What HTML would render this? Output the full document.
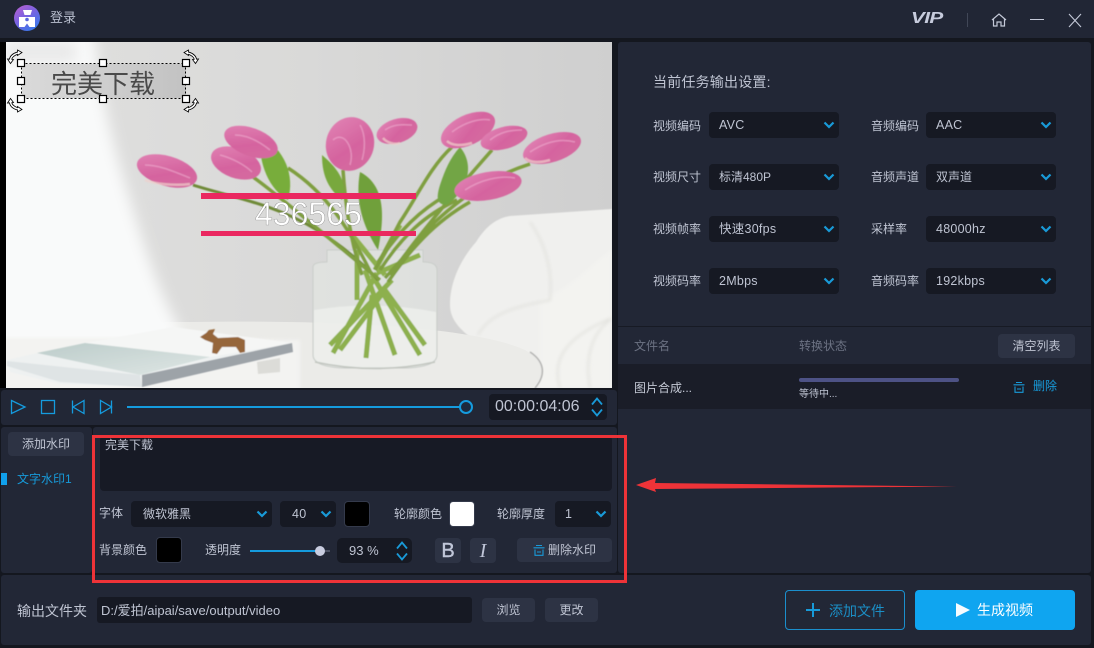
<!DOCTYPE html>
<html lang="zh"><head><meta charset="utf-8"><title>登录</title>
<style>
*{box-sizing:border-box;margin:0;padding:0}
html,body{width:1094px;height:648px;overflow:hidden;background:#14171f}
body{position:relative;font:12px/16px "Liberation Sans","Noto Sans CJK SC",sans-serif;color:#bfc4d2}
.a{position:absolute}
.t{position:absolute;white-space:nowrap;line-height:16px}
.p{position:absolute;background:#222736}
.s{position:absolute;height:26px;background:#161923;border-radius:4px;color:#bfc4d2;line-height:27px;padding-left:10px;white-space:nowrap}
.s svg{position:absolute;right:4px;top:9px}
.l{font-size:12.5px;letter-spacing:.25px}
.b{position:absolute;background:#2d3344;border-radius:4px;text-align:center;color:#bfc4d2;white-space:nowrap}
.c{position:absolute;width:26px;height:26px;border-radius:4px;border:1px solid #343a4b;background:#000}
</style></head><body>
<svg width="0" height="0" style="position:absolute"><defs><symbol id="ch" viewBox="0 0 12 8"><path d="M1.5 1.5 6 6l4.500-4.500" fill="none" stroke="#199ad8" stroke-width="2.200"/></symbol>
<symbol id="sp" viewBox="0 0 14 24"><path d="M2 9.500 7 3.500l5 6M2 14.500l5 6 5-6" fill="none" stroke="#199ad8" stroke-width="1.800"/></symbol>
<symbol id="tr" viewBox="0 0 12 12"><path d="M3 1.500h6M.5 3.800h11M2 5.500v5.800h8V5.500M4 8h4" fill="none" stroke="#199ad8" stroke-width="1.100"/></symbol></defs></svg>

<div class="p" style="left:0;top:0;width:1094px;height:38px;background:#212635"></div>
<svg class="a" style="left:13px;top:4px" width="28" height="28" viewBox="0 0 28 28"><defs><linearGradient id="lg" x1="0" y1="0" x2=".7" y2="1"><stop offset="0" stop-color="#c05fd0"/><stop offset=".5" stop-color="#7a62e0"/><stop offset="1" stop-color="#3878ea"/></linearGradient></defs><circle cx="14" cy="14" r="13" fill="url(#lg)"/><path d="M10 6h9l-1.500 5h-6zM6 13h16v10h-5.500L14 19.500 11.500 23H6z" fill="#fff"/><circle cx="14" cy="15.500" r="1.800" fill="#5a67dd"/></svg>
<span class="t" style="left:50px;top:10px;font-size:13px;color:#b9bfcf">登录</span>
<span class="t" style="left:911px;top:10px;font:italic bold 16px/18px 'Liberation Sans',sans-serif;color:#c6cbdc;letter-spacing:-.5px;transform:scaleX(1.300);transform-origin:left">VIP</span>
<div class="a" style="left:967px;top:13px;width:1px;height:14px;background:#414757"></div>
<svg class="a" style="left:990px;top:12px" width="18" height="16" viewBox="0 0 18 16"><path d="M2 8 9 2l7 6M3.500 7v7h3.500v-4h4v4h3.500V7" fill="none" stroke="#c4c9d8" stroke-width="1.200"/></svg>
<div class="a" style="left:1030px;top:19px;width:14px;height:1px;background:#c4c9d8"></div>
<svg class="a" style="left:1067px;top:12px" width="16" height="16" viewBox="0 0 16 16"><path d="M2 2l12 13M14 2 2 15" fill="none" stroke="#c4c9d8" stroke-width="1.100"/></svg>

<div class="a" style="left:0;top:42px;width:6px;height:346px;background:#000"></div>
<svg class="a" style="left:6px;top:42px" width="606" height="346" viewBox="6 42 606 346">
<defs>
<linearGradient id="wall" x1="0" y1="0" x2="1" y2="0"><stop offset="0" stop-color="#e0e0df"/><stop offset=".5" stop-color="#d9d9d8"/><stop offset="1" stop-color="#cfcfcf"/></linearGradient>
<linearGradient id="pk" x1="0" y1="0" x2="1" y2="1"><stop offset="0" stop-color="#e286b6"/><stop offset=".55" stop-color="#d5649f"/><stop offset="1" stop-color="#d46c9f"/></linearGradient>
<linearGradient id="wm" x1="0" y1="0" x2="1" y2="0"><stop offset="0" stop-color="#dadada"/><stop offset="1" stop-color="#c2c2c2"/></linearGradient>
<linearGradient id="bk" x1="0" y1="0" x2="1" y2="1"><stop offset="0" stop-color="#bcccca"/><stop offset="1" stop-color="#dfe7e5"/></linearGradient>
<filter id="bl"><feGaussianBlur stdDeviation=".6"/></filter><filter id="b4" x="-30%" y="-30%" width="160%" height="160%"><feGaussianBlur stdDeviation="7"/></filter>
<filter id="b2"><feGaussianBlur stdDeviation="1.500"/></filter>
<g id="rot"><path d="M10.500 60Q11 55 18 53" fill="none" stroke="#000" stroke-width="3.200"/><path d="M17.500 50 22 52.500 17.500 55.500Z M7.500 59 10.500 63.500 13.500 59.500Z" fill="#fff" stroke="#000" stroke-width=".8"/><path d="M10.500 60Q11 55 18 53" fill="none" stroke="#fff" stroke-width="1.400"/></g>
</defs>
<rect x="6" y="42" width="606" height="346" fill="url(#wall)"/>
<path d="M476 242C486 226 497 218 510 216L612 209V388H520C510 350 450 340 450 305C450 280 462 258 476 242Z" fill="#f0f0ee" filter="url(#bl)"/>
<path d="M540 300C570 290 595 260 612 250V388H540Z" fill="#f3f3f0" filter="url(#b2)"/>
<path d="M530 222C550 250 552 280 550 300C520 306 490 312 478 335M560 388C553 365 558 340 612 318M610 320C590 335 585 360 590 388" fill="none" stroke="#e2e2de" stroke-width="2" filter="url(#b2)"/>
<path d="M-20 322H190C320 320 470 325 525 350C545 362 546 375 532 388H-20Z" fill="#ebebe8"/>
<path d="M535 388C546 375 545 362 530 352" fill="none" stroke="#b4b4b2" stroke-width="1.500" filter="url(#bl)"/>
<path d="M-30 20H93C98 80 108 130 130 200C145 250 160 295 178 325L190 400H-30Z" fill="#f9fafa" filter="url(#b4)"/>
<rect x="6" y="42" width="70" height="20" fill="#e8e8e8" filter="url(#b4)"/>
<path d="M-10 338H200L300 340V400H-10Z" fill="#f3f3f1" filter="url(#b2)"/>
<g filter="url(#bl)">
<path d="M313 267Q313 262 327 262V250H423V262Q437 262 437 270V355Q437 367 405 368H345Q313 367 313 355Z" fill="#e3e6e3" fill-opacity=".65" stroke="#c9cdc9"/>
<path d="M314 310Q375 300 436 312V355Q436 366 405 367H345Q314 366 314 355Z" fill="#eef0ec" fill-opacity=".8"/>
<path d="M315 362Q375 375 435 362" fill="none" stroke="#c2c6c0" stroke-width="1.500"/>
<path d="M333 353 377 273M340 350 385 290M366 358 372 295M330 345 392 280M420 355 372 275M425 345 385 290M395 355 365 270M357 300V250M377 273 420 255M385 275 352 235M375 270 400 225" fill="none" stroke="#8db04d" stroke-width="5"/>
<path d="M193 185C230 197 273 203 317 230C340 245 360 260 378 280" fill="none" stroke="#6f8a38" stroke-width="3"/>
<path d="M253 177C285 200 330 240 380 280M288 168C327 193 350 230 372 275M343 170C345 200 350 240 362 275M452 147C430 167 417 197 400 222L375 270M492 150C470 175 430 220 390 275M530 164C505 172 475 185 435 222L385 278M470 202C433 223 410 250 388 282M457 200C425 215 403 235 380 270M447 195C420 210 400 230 378 262" fill="none" stroke="#7f9f3f" stroke-width="3.500"/>
<path d="M260 135C285 150 295 175 288 200C270 190 258 165 260 135Z" fill="#78ad3a"/>
<path d="M322 155C340 170 348 185 342 200C330 190 322 178 322 155Z" fill="#78a83e"/>
<path d="M360 172C385 185 385 215 378 250C362 225 355 200 360 172Z" fill="#6fa03a"/>
<path d="M460 147C475 165 468 190 447 205C435 205 437 195 440 185C445 170 450 158 460 147Z" fill="#72a545"/>
<g>
<ellipse cx="167" cy="171" rx="31" ry="15" transform="rotate(16 167 171)" fill="url(#pk)"/>
<ellipse cx="236" cy="163" rx="26" ry="15" transform="rotate(20 236 163)" fill="url(#pk)"/>
<ellipse cx="251" cy="142" rx="28" ry="14" transform="rotate(20 251 142)" fill="url(#pk)"/>
<ellipse cx="350" cy="144" rx="24" ry="27" transform="rotate(15 350 144)" fill="url(#pk)"/>
<ellipse cx="397" cy="131" rx="21" ry="12" transform="rotate(-17 397 131)" fill="url(#pk)"/>
<ellipse cx="468" cy="130" rx="29" ry="15" transform="rotate(-25 468 130)" fill="url(#pk)"/>
<ellipse cx="504" cy="138" rx="24" ry="11" transform="rotate(-15 504 138)" fill="url(#pk)"/>
<ellipse cx="552" cy="148" rx="30" ry="14" transform="rotate(-17 552 148)" fill="url(#pk)"/>
<ellipse cx="488" cy="186" rx="34" ry="14" transform="rotate(-10 488 186)" fill="url(#pk)"/>
<path d="M145 165C160 165 175 172 190 178M220 155C232 158 245 165 252 172M235 135C248 135 260 142 270 150M333 140C345 130 355 150 350 165M360 125C366 135 365 150 362 160M385 130C395 123 405 125 412 125M452 132C465 122 480 118 490 120M490 140C500 132 510 130 522 130M530 152C545 142 560 138 575 142M465 190C480 180 500 175 515 178" fill="none" stroke="#eeaccf" stroke-width="1.500" stroke-opacity=".6"/>
<path d="M145 180C155 184 175 186 190 184M447 141C452 146 462 146 472 143M383 138C387 143 395 145 400 143M525 158C530 163 540 163 550 160" fill="none" stroke="#f0d0cc" stroke-width="2.500" stroke-opacity=".7"/>
</g>
<path d="M7 360 37 353 85 343 210 357 292 343 293 352 142 387 60 384 10 372Z" fill="#eef1f1"/>
<path d="M173 327 292 343 210 357 85 343Z" fill="#f5f6f5"/>
<path d="M37 353 85 343 210 357 140 375Z" fill="url(#bk)"/>
<path d="M7 361 140 375 142 387 60 382 7 366Z" fill="#dfe4e5"/>
<path d="M142 375 292 343 293 352 142 387Z" fill="#9da3a8"/>
<path d="M200 337 206 333 209 330 215 329 213 334 218 338 238 337 245 340 245 352 240 353 236 347 222 347 217 354 212 353 213 343 205 340Z" fill="#96663b"/>
<path d="M257 362 280 358 280 372 258 374Z" fill="#dcdcd8"/>
</g>
<path d="M201 193H416V199H201ZM201 231H416V236H201Z" fill="#ea2860"/>
<text x="255" y="225" font-family="Liberation Sans" font-size="32" fill="#fff" stroke="#808080" stroke-width=".35">436565</text>
<rect x="22" y="64" width="164" height="34" fill="url(#wm)"/>
<text x="51" y="93" font-family="Liberation Sans,Noto Sans CJK SC,sans-serif" font-size="26" fill="#4a4a4a">完美下载</text>
<rect x="21.500" y="63.500" width="164" height="35" fill="none" stroke="#000" stroke-dasharray="2 2"/>
<g fill="#fff" stroke="#000" stroke-width="1.200"><rect x="17.500" y="59.500" width="7" height="7"/><rect x="99.500" y="59.500" width="7" height="7"/><rect x="182.500" y="59.500" width="7" height="7"/><rect x="17.500" y="77.500" width="7" height="7"/><rect x="182.500" y="77.500" width="7" height="7"/><rect x="17.500" y="95.500" width="7" height="7"/><rect x="99.500" y="95.500" width="7" height="7"/><rect x="182.500" y="95.500" width="7" height="7"/></g>
<use href="#rot"/><use href="#rot" transform="translate(206 0) scale(-1 1)"/><use href="#rot" transform="translate(0 162) scale(1 -1)"/><use href="#rot" transform="translate(206 162) scale(-1 -1)"/>
</svg>
<div class="a" style="left:612px;top:42px;width:6px;height:346px;background:#14171f"></div>

<div class="p" style="left:1px;top:390px;width:616px;height:35px;border-radius:3px"></div>
<svg class="a" style="left:10px;top:398px" width="104" height="18" viewBox="0 0 104 18"><g fill="none" stroke="#159bde" stroke-width="1.300"><path d="M1.500 2.500 15 9 1.500 15.500Z"/><rect x="31.500" y="2.500" width="13" height="13"/><path d="M62.500 2.500V15.500M74 2.500 63 9l11 6.500Z"/><path d="M101.500 2.500V15.500M90.500 2.500 101.500 9 90.500 15.500Z"/></g></svg>
<div class="a" style="left:127px;top:406px;width:335px;height:2px;background:#159bde"></div>
<svg class="a" style="left:458px;top:399px" width="16" height="16"><circle cx="8" cy="8" r="6" fill="#1d2a3d" stroke="#159bde" stroke-width="2"/></svg>
<div class="a" style="left:489px;top:394px;width:118px;height:26px;background:#161923;border-radius:4px"></div>
<span class="t" style="left:495px;top:399px;font-size:16px;color:#bfc4d2">00:00:04:06</span>
<svg class="a" style="left:590px;top:395px" width="14" height="24"><use href="#sp"/></svg>

<div class="p" style="left:1px;top:427px;width:91px;height:146px;border-radius:3px"></div>
<div class="p" style="left:93px;top:427px;width:524px;height:146px;border-radius:3px"></div>
<div class="b" style="left:8px;top:432px;width:76px;height:24px;line-height:25px">添加水印</div>
<div class="a" style="left:1px;top:473px;width:6px;height:12px;background:#10a0ec"></div>
<span class="t" style="left:17px;top:471px;color:#179ad9">文字水印1</span>

<div class="a" style="left:100px;top:436px;width:512px;height:55px;background:#171a25;border-radius:4px"></div>
<span class="t" style="left:105px;top:437px;color:#bfc4d2">完美下载</span>
<span class="t" style="left:99px;top:505px">字体</span>
<div class="s" style="left:131px;top:501px;width:141px;padding-left:12px">微软雅黑<svg width="12" height="8"><use href="#ch"/></svg></div>
<div class="s l" style="left:280px;top:501px;width:56px;padding-left:12px">40<svg width="12" height="8"><use href="#ch"/></svg></div>
<div class="c" style="left:344px;top:501px"></div>
<span class="t" style="left:394px;top:506px">轮廓颜色</span>
<div class="c" style="left:449px;top:501px;background:#fff"></div>
<span class="t" style="left:497px;top:506px">轮廓厚度</span>
<div class="s l" style="left:555px;top:501px;width:56px">1<svg width="12" height="8"><use href="#ch"/></svg></div>
<span class="t" style="left:99px;top:542px">背景颜色</span>
<div class="c" style="left:156px;top:537px"></div>
<span class="t" style="left:205px;top:542px">透明度</span>
<div class="a" style="left:250px;top:550px;width:70px;height:2px;background:#159bde"></div>
<div class="a" style="left:320px;top:550px;width:10px;height:2px;background:#4b5163"></div>
<div class="a" style="left:315px;top:546px;width:10px;height:10px;border-radius:50%;background:#c9cde0"></div>
<div class="s" style="left:337px;top:538px;width:75px;height:25px;line-height:26px;padding-left:12px;border-radius:5px;font-size:13px">93 %</div>
<svg class="a" style="left:395px;top:539px" width="14" height="24"><use href="#sp"/></svg>
<div class="b" style="left:435px;top:538px;width:26px;height:25px;font:20px/26px 'Liberation Sans',sans-serif;color:#c0c6d8;-webkit-text-stroke:.4px #c0c6d8">B</div>
<div class="b" style="left:470px;top:538px;width:26px;height:25px;font:italic 20px/26px 'Liberation Serif',serif;color:#c0c6d8">I</div>
<div class="b" style="left:517px;top:538px;width:95px;height:24px;line-height:25px;padding-left:15px">删除水印</div>
<svg class="a" style="left:533px;top:544px" width="12" height="12"><use href="#tr"/></svg>

<div class="p" style="left:618px;top:42px;width:473px;height:531px;border-radius:3px"></div>
<span class="t" style="left:653px;top:74px;font-size:14px;letter-spacing:.2px">当前任务输出设置:</span>
<span class="t" style="left:653px;top:118px">视频编码</span><div class="s l" style="left:709px;top:112px;width:130px">AVC<svg width="12" height="8"><use href="#ch"/></svg></div>
<span class="t" style="left:871px;top:118px">音频编码</span><div class="s l" style="left:926px;top:112px;width:130px">AAC<svg width="12" height="8"><use href="#ch"/></svg></div>
<span class="t" style="left:653px;top:169px">视频尺寸</span><div class="s" style="left:709px;top:164px;width:130px">标清480P<svg width="12" height="8"><use href="#ch"/></svg></div>
<span class="t" style="left:871px;top:169px">音频声道</span><div class="s" style="left:926px;top:164px;width:130px">双声道<svg width="12" height="8"><use href="#ch"/></svg></div>
<span class="t" style="left:653px;top:221px">视频帧率</span><div class="s l" style="left:709px;top:216px;width:130px">快速30fps<svg width="12" height="8"><use href="#ch"/></svg></div>
<span class="t" style="left:871px;top:221px">采样率</span><div class="s l" style="left:926px;top:216px;width:130px">48000hz<svg width="12" height="8"><use href="#ch"/></svg></div>
<span class="t" style="left:653px;top:273px">视频码率</span><div class="s l" style="left:709px;top:268px;width:130px">2Mbps<svg width="12" height="8"><use href="#ch"/></svg></div>
<span class="t" style="left:871px;top:273px">音频码率</span><div class="s l" style="left:926px;top:268px;width:130px">192kbps<svg width="12" height="8"><use href="#ch"/></svg></div>

<div class="a" style="left:618px;top:326px;width:473px;height:1px;background:#171a24"></div>
<span class="t" style="left:634px;top:338px;color:#6c7283">文件名</span>
<span class="t" style="left:799px;top:338px;color:#6c7283">转换状态</span>
<div class="b" style="left:998px;top:334px;width:77px;height:24px;line-height:25px">清空列表</div>
<div class="a" style="left:618px;top:364px;width:473px;height:45px;background:#1a1d28"></div>
<span class="t" style="left:634px;top:380px;color:#c5cad6">图片合成...</span>
<div class="a" style="left:799px;top:378px;width:160px;height:4px;border-radius:2px;background:#4d5285"></div>
<span class="t" style="left:799px;top:387px;font-size:10px;color:#bfc4d2">等待中...</span>
<svg class="a" style="left:1013px;top:381px" width="12" height="12"><use href="#tr"/></svg>
<span class="t" style="left:1033px;top:378px;color:#179ad9">删除</span>

<div class="p" style="left:1px;top:575px;width:1090px;height:70px;border-radius:3px"></div>
<span class="t" style="left:17px;top:603px;font-size:14px;color:#bfc4d2">输出文件夹</span>
<div class="a" style="left:97px;top:597px;width:375px;height:26px;background:#161923;border-radius:3px;padding-left:4px;line-height:27px;color:#bfc4d2;font-size:13px">D:/爱拍/aipai/save/output/video</div>
<div class="b" style="left:482px;top:598px;width:53px;height:24px;line-height:25px">浏览</div>
<div class="b" style="left:545px;top:598px;width:53px;height:24px;line-height:25px">更改</div>
<div class="a" style="left:785px;top:590px;width:120px;height:40px;border:1px solid #1b8fcd;border-radius:4px"></div>
<svg class="a" style="left:805px;top:603px" width="16" height="14"><path d="M8 0v14M1 7h14" stroke="#179ad9" stroke-width="2"/></svg>
<span class="t" style="left:829px;top:603px;font-size:14px;color:#1b8fc6">添加文件</span>
<div class="a" style="left:915px;top:590px;width:160px;height:40px;background:#0fa5f0;border-radius:4px"></div>
<svg class="a" style="left:956px;top:603px" width="14" height="14"><path d="M0 0 14 7 0 14Z" fill="#f6fbff"/></svg>
<span class="t" style="left:977px;top:602px;font-size:14px;color:#fff">生成视频</span>

<div class="a" style="left:92px;top:435px;width:535px;height:148px;border:3px solid #ee3338"></div>
<svg class="a" style="left:630px;top:470px" width="335" height="30"><path d="M6 15 26 8 25 13 327 16.500 25 19 26 22Z" fill="#ee3338"/></svg>
</body></html>
